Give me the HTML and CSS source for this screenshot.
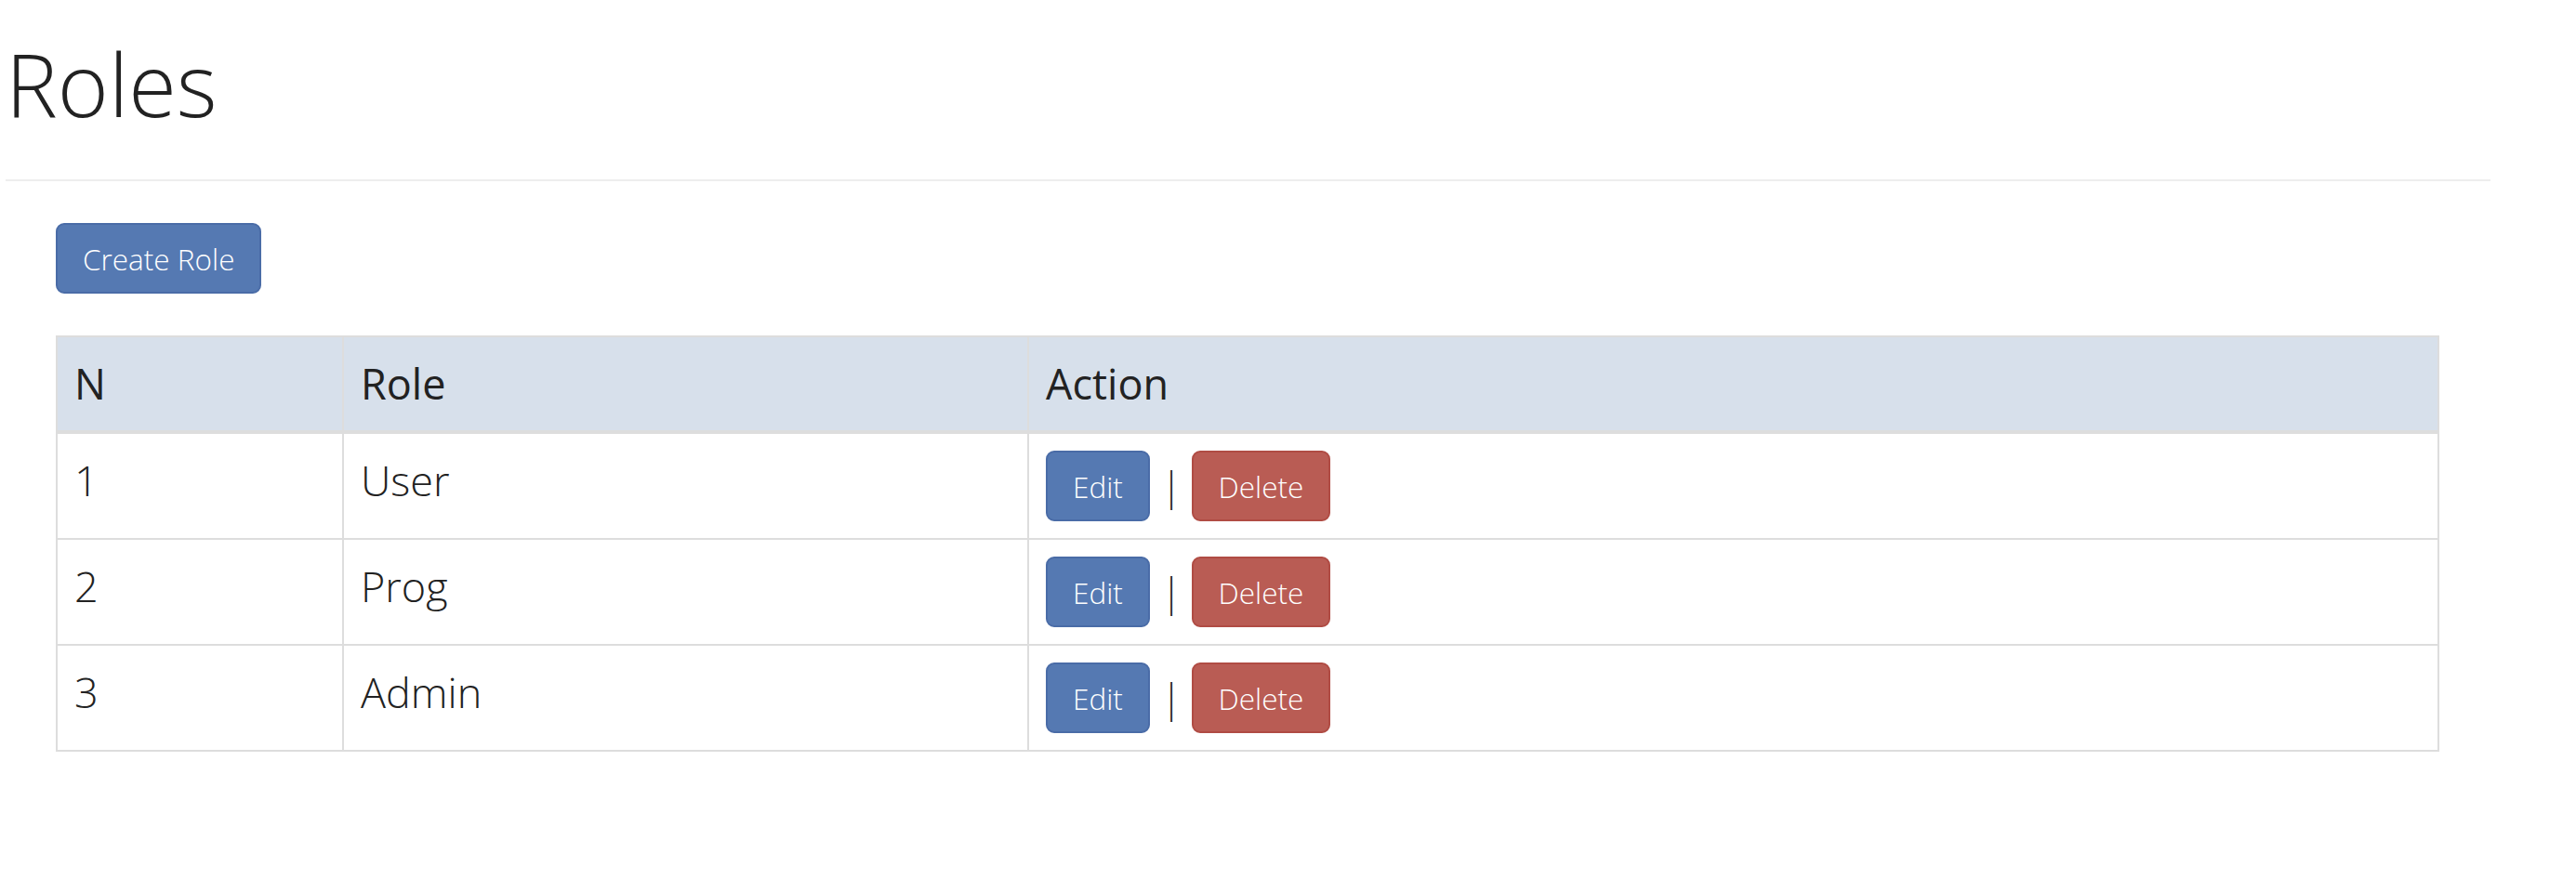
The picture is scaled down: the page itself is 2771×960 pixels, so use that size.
FILE: index.html
```html
<!DOCTYPE html>
<html lang="en">
<head>
<meta charset="utf-8">
<title>Roles</title>
<link rel="stylesheet" href="styles.css">
</head>
<body>
<div class="page">
  <h1 class="title">Roles</h1>
  <hr class="rule">
  <div class="content">
    <a class="btn btn-primary" href="#">Create Role</a>
    <table class="roles">
      <thead>
        <tr>
          <th class="col-n">N</th>
          <th class="col-role">Role</th>
          <th class="col-action">Action</th>
        </tr>
      </thead>
      <tbody>
        <tr>
          <td>1</td>
          <td>User</td>
          <td><div class="actions"><a class="btn btn-primary" href="#">Edit</a><span class="sep">|</span><a class="btn btn-danger" href="#">Delete</a></div></td>
        </tr>
        <tr>
          <td>2</td>
          <td>Prog</td>
          <td><div class="actions"><a class="btn btn-primary" href="#">Edit</a><span class="sep">|</span><a class="btn btn-danger" href="#">Delete</a></div></td>
        </tr>
        <tr>
          <td>3</td>
          <td>Admin</td>
          <td><div class="actions"><a class="btn btn-primary" href="#">Edit</a><span class="sep">|</span><a class="btn btn-danger" href="#">Delete</a></div></td>
        </tr>
      </tbody>
    </table>
  </div>
</div>
</body>
</html>
```

FILE: styles.css
```css
html, body {
  margin: 0;
  padding: 0;
  background: #ffffff;
}

body {
  font-family: "Open Sans", "Liberation Sans", sans-serif;
  font-weight: 300;
  color: #222222;
}

.page {
  width: 2673px;
  margin-left: 6px;
}

.title {
  margin: 0;
  padding-top: 35px;
  font-size: 94px;
  line-height: 111px;
  font-weight: 300;
  color: #222222;
}

.rule {
  margin: 47px 0 0 0;
  height: 0;
  border: 0;
  border-top: 2px solid #eeeeee;
}

.content {
  padding: 45px 0 0 54px;
}

.btn {
  display: inline-block;
  box-sizing: border-box;
  font-size: 31.5px;
  line-height: 45px;
  font-weight: 300;
  padding: 13.5px 27px;
  border: 2px solid transparent;
  border-radius: 9px;
  color: #ffffff;
  text-decoration: none;
  white-space: nowrap;
}

.btn-primary {
  background: #5579b2;
  border-color: #4a6ca7;
}

.btn-danger {
  background: #b95c54;
  border-color: #b04c44;
}

.roles {
  margin-top: 45px;
  width: 2564px;
  table-layout: fixed;
  border-collapse: collapse;
  border: 2px solid #dddddd;
  font-size: 45px;
  line-height: 64px;
}

.roles th,
.roles td {
  padding: 18px;
  text-align: left;
  vertical-align: top;
  border: 2px solid #dddddd;
}

.roles th {
  font-weight: 400;
  background: #d7e0eb;
  border-bottom-width: 4px;
}

.col-n { width: 270px; }
.col-role { width: 699px; }
.col-action { width: auto; }

.actions {
  display: flex;
  align-items: center;
}

.sep {
  font-size: 42px;
  line-height: 64px;
  font-weight: 300;
  margin: 0 10px 0 12px;
  color: #222222;
}
```
